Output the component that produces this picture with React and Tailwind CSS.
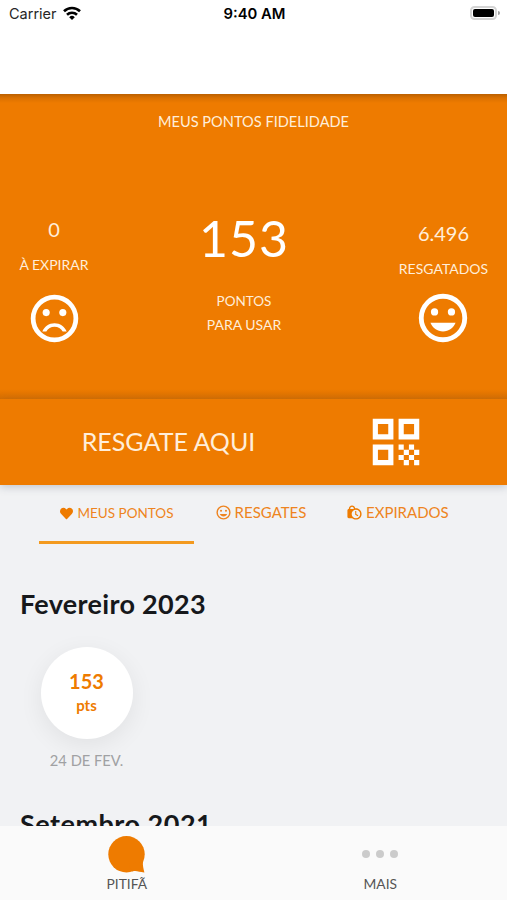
import { FaHeart } from 'react-icons/fa';
import { MdLockClock, MdQrCode } from 'react-icons/md';

const HAPPY_MOUTH = 'M12 17.6c2.33 0 4.4-1.5 5.2-3.6H6.8c.8 2.1 2.87 3.6 5.2 3.6z';
const SAD_MOUTH =
  'M12 14c-2.33 0-4.32 1.45-5.12 3.5h1.67c.69-1.19 1.97-2 3.45-2s2.75.81 3.45 2h1.67c-.8-2.05-2.79-3.5-5.12-3.5z';

function Face({ mouth, className }) {
  return (
    <svg viewBox="0 0 24 24" fill="currentColor" className={className}>
      <circle cx="12" cy="12" r="9" fill="none" stroke="currentColor" strokeWidth="2" />
      <circle cx="8.5" cy="9.5" r="1.5" />
      <circle cx="15.5" cy="9.5" r="1.5" />
      <path d={mouth} />
    </svg>
  );
}

function StatusBar() {
  return (
    <div className="flex h-7 items-center justify-between pr-[7px] pl-[9px] font-['Inter',sans-serif] text-black">
      <div className="flex w-40 items-center gap-1.5 text-[14.5px] text-neutral-800">
        Carrier
        <svg
          viewBox="0 0 18 14"
          className="-mt-0.5 h-[14px] w-[18px] text-black"
          fill="none"
          stroke="currentColor"
          strokeWidth="2.6"
        >
          <path d="M1 5.2a11.5 11.5 0 0 1 16 0" />
          <path d="M4 8.8a7.2 7.2 0 0 1 10 0" />
          <path d="M9 14L6.2 11.2a4 4 0 0 1 5.6 0z" fill="currentColor" stroke="none" />
        </svg>
      </div>
      <span className="text-[14.8px] font-semibold">9:40 AM</span>
      <div className="-mt-0.5 flex w-40 items-center justify-end gap-px">
        <div className="h-[14px] w-[27px] rounded-[4.5px] border-2 border-neutral-300 p-px">
          <div className="h-full rounded-[2px] bg-black" />
        </div>
        <div className="h-1 w-[2px] rounded-r bg-neutral-400" />
      </div>
    </div>
  );
}

export default function App() {
  return (
    <div className="flex h-[900px] w-[507px] flex-col overflow-hidden bg-[#f1f2f4] font-['Lato',sans-serif]">
      <header className="h-[94px] shrink-0 bg-white">
        <StatusBar />
      </header>

      {/* Points summary */}
      <section className="h-[305px] shrink-0 bg-[#ee7b00] bg-[linear-gradient(to_bottom,rgba(80,40,0,0.32)_0,rgba(80,40,0,0.12)_4px,transparent_9px,transparent_295px,rgba(80,40,0,0.14)_305px)] text-[#ffeeda]">
        <h1 className="pt-[18px] text-center text-[14.6px] leading-5">MEUS PONTOS FIDELIDADE</h1>
        <div className="flex justify-between pt-[75px]">
          <div className="flex w-[108px] flex-col items-center pt-[8px]">
            <span className="text-[20px] leading-7">0</span>
            <span className="mt-[12px] text-[14px] leading-5">À EXPIRAR</span>
            <Face mouth={SAD_MOUTH} className="mt-[15px] h-[57px] w-[57px] text-white" />
          </div>
          <div className="flex flex-col items-center">
            <span className="pt-px text-[50px] leading-[60px] tracking-[1px] text-white">153</span>
            <span className="mt-[21px] flex flex-col items-center text-[14px] leading-6">
              <span className="text-[13.5px]">PONTOS</span>
              <span>PARA USAR</span>
            </span>
          </div>
          <div className="flex w-[127px] flex-col items-center pt-[12px]">
            <span className="text-[20px] leading-7">6.496</span>
            <span className="mt-[12px] text-[14px] leading-5">RESGATADOS</span>
            <Face mouth={HAPPY_MOUTH} className="mt-[10px] h-[58px] w-[58px] text-white" />
          </div>
        </div>
      </section>

      <button className="z-10 flex h-[86px] shrink-0 items-center bg-[#ee7b00] text-[#ffeeda] shadow-[0_2px_8px_rgba(60,70,90,0.25)]">
        <span className="w-[337px] text-center text-[25px]">RESGATE AQUI</span>
        <MdQrCode className="ml-[28px] h-[62px] w-[62px] text-white" />
      </button>

      {/* Tabs */}
      <nav className="flex h-[59px] shrink-0 pl-[39px] text-[15px] text-[#ee8420]">
        <div className="flex h-full w-[155px] items-center justify-center gap-[5px] border-b-[3px] border-[#f39a1f] text-[13.5px]">
          <FaHeart className="h-[13px] w-[13px] text-[#ee7b00]" />
          MEUS PONTOS
        </div>
        <div className="flex h-full w-[133px] items-center justify-center gap-[3px] border-b-[3px] border-transparent pb-px">
          <Face mouth={HAPPY_MOUTH} className="h-[17px] w-[17px]" />
          RESGATES
        </div>
        <div className="flex h-full items-center gap-[3px] border-b-[3px] border-transparent pb-px pl-[19px]">
          <MdLockClock className="h-[17px] w-[17px] text-[#ee7b00]" />
          EXPIRADOS
        </div>
      </nav>

      <main className="min-h-0 flex-1 overflow-hidden pl-[20px] text-[#16181b]">
        <h2 className="mt-[42px] text-[27px] leading-9 font-bold tracking-[0.3px]">Fevereiro 2023</h2>
        <div className="mt-[25px] ml-[21px] flex w-[91px] flex-col items-center">
          <div className="flex h-[92px] w-[92px] flex-col items-center justify-center rounded-full bg-white font-bold text-[#ee7b00] shadow-[0_6px_24px_rgba(0,0,0,0.07)]">
            <span className="text-[20px] leading-6">153</span>
            <span className="text-[15px] leading-6">pts</span>
          </div>
          <span className="mt-[11px] text-[14.7px] leading-5 whitespace-nowrap text-[#a0a1a3]">24 DE FEV.</span>
        </div>
        <h2 className="mt-[36px] text-[27px] leading-9 font-bold tracking-[0.5px]">Setembro 2021</h2>
      </main>

      <footer className="flex h-[74px] shrink-0 bg-[#fafafa] text-[13.8px] text-[#555]">
        <div className="flex flex-1 flex-col items-center pt-[10px]">
          <svg viewBox="0 0 37 37" className="h-[37px] w-[37px] text-[#ee7b00]" fill="currentColor">
            <circle cx="18.5" cy="18.3" r="18.2" />
            <path d="M35 25.5C34.5 29 35.5 33 36.4 36.4C31.5 36.5 28.5 34.2 24.5 35.5L20 28z" />
          </svg>
          <span className="mt-px leading-5">PITIFÃ</span>
        </div>
        <div className="flex flex-1 flex-col items-center pt-[24px]">
          <div className="flex gap-[6px]">
            <i className="h-2 w-2 rounded-full bg-[#cbcbcb]" />
            <i className="h-2 w-2 rounded-full bg-[#cbcbcb]" />
            <i className="h-2 w-2 rounded-full bg-[#cbcbcb]" />
          </div>
          <span className="mt-[16px] leading-5">MAIS</span>
        </div>
      </footer>
    </div>
  );
}
